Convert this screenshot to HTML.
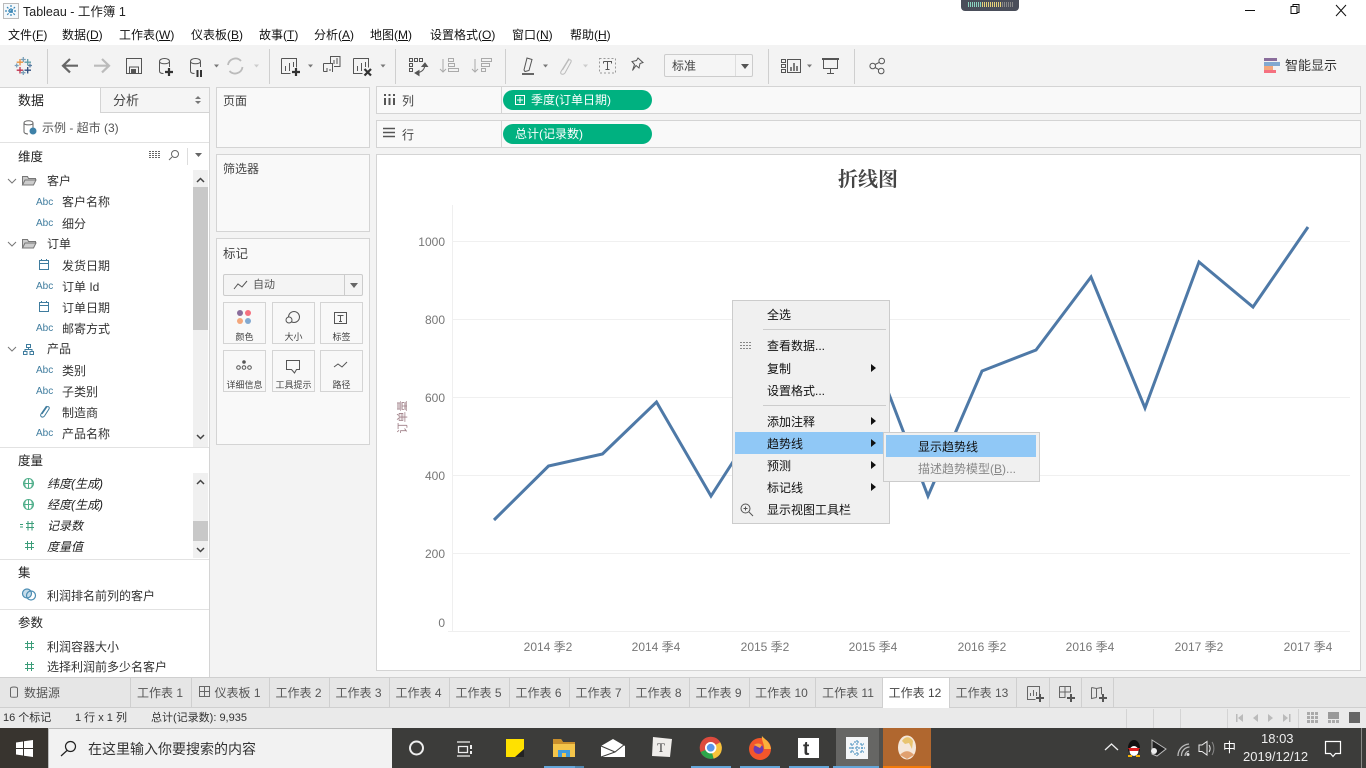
<!DOCTYPE html>
<html lang="zh"><head><meta charset="utf-8"><title>Tableau - 工作簿 1</title>
<style>
*{box-sizing:border-box}
html,body{margin:0;padding:0;width:1366px;height:768px;overflow:hidden;background:#f3f3f3}
body{position:relative;font:12px/16px "Liberation Sans","Noto Sans CJK SC",sans-serif;color:#333}
.a,.t,svg.i{position:absolute}
.t{white-space:nowrap;line-height:16px}
.u{text-decoration:underline}
.box{position:absolute;background:#f9f9f9;border:1px solid #d4d4d4}
.sep{position:absolute;width:1px;background:#cfcfcf}
.abc{position:absolute;font-size:10px;color:#3f7c9e;line-height:14px;left:36px}
.pill{position:absolute;left:503px;width:149px;height:20px;background:#00b180;border-radius:10px;color:#fff;line-height:20px;padding-left:12px;white-space:nowrap}
.mk{position:absolute;width:43px;height:42px;background:#f8f8f8;border:1px solid #d4d4d4;font-size:9px;text-align:center;padding-top:27px;line-height:14px;color:#444;white-space:nowrap}
.tab{position:absolute;top:678px;height:30px;border-right:1px solid #cfcfcf;color:#555;text-align:center;line-height:30px;white-space:nowrap;padding-right:2px}
.mi{position:absolute;left:767px;line-height:16px;color:#111;white-space:nowrap}
.arr{position:absolute;left:871px;width:0;height:0;border-left:5px solid #111;border-top:4px solid transparent;border-bottom:4px solid transparent}
svg{overflow:visible}
</style></head><body>

<!-- title + menu -->
<div class="a" style="left:0;top:0;width:1366px;height:45px;background:#fff"></div>
<svg class="i" style="left:3px;top:3px" width="16" height="16" viewBox="0 0 16 16"><rect x=".5" y=".5" width="15" height="15" fill="#f4f8fb" stroke="#bbb"/><path d="M8 2v12M2 8h12M4 4l8 8M12 4l-8 8" stroke="#3a87b7" stroke-width="1.2" stroke-dasharray="2 1"/></svg>
<div class="t" style="left:23px;top:4px;color:#222;font-size:12.5px">Tableau - 工作簿 1</div>
<div class="a" style="left:961px;top:0;width:58px;height:11px;background:#4a4e5a;border-radius:0 0 4px 4px"></div>
<div class="a" style="left:968px;top:2px;width:20px;height:5px;background:repeating-linear-gradient(90deg,#8bd3c0 0 1px,#4a4e5a 1px 2px)"></div>
<div class="a" style="left:982px;top:2px;width:20px;height:5px;background:repeating-linear-gradient(90deg,#e6d27a 0 1px,#4a4e5a 1px 2px)"></div>
<div class="a" style="left:1002px;top:2px;width:12px;height:5px;background:repeating-linear-gradient(90deg,#888 0 1px,#4a4e5a 1px 2px)"></div>
<svg class="i" style="left:1240px;top:0" width="126" height="22"><path d="M5 10.500h10" stroke="#111"/><path d="M51 6.500h6v7h-6zM53 6.500v-2h6v8h-2" fill="none" stroke="#111"/><path d="M96 5l10 11M106 5l-10 11" stroke="#111"/></svg>
<div class="t" style="left:8px;top:27px;color:#111">文件(<span class="u">F</span>)</div>
<div class="t" style="left:62px;top:27px;color:#111">数据(<span class="u">D</span>)</div>
<div class="t" style="left:119px;top:27px;color:#111">工作表(<span class="u">W</span>)</div>
<div class="t" style="left:191px;top:27px;color:#111">仪表板(<span class="u">B</span>)</div>
<div class="t" style="left:259px;top:27px;color:#111">故事(<span class="u">T</span>)</div>
<div class="t" style="left:314px;top:27px;color:#111">分析(<span class="u">A</span>)</div>
<div class="t" style="left:370px;top:27px;color:#111">地图(<span class="u">M</span>)</div>
<div class="t" style="left:430px;top:27px;color:#111">设置格式(<span class="u">O</span>)</div>
<div class="t" style="left:512px;top:27px;color:#111">窗口(<span class="u">N</span>)</div>
<div class="t" style="left:570px;top:27px;color:#111">帮助(<span class="u">H</span>)</div>

<!-- toolbar -->
<div class="sep" style="left:47px;top:49px;height:35px"></div>
<div class="sep" style="left:269px;top:49px;height:35px"></div>
<div class="sep" style="left:395px;top:49px;height:35px"></div>
<div class="sep" style="left:505px;top:49px;height:35px"></div>
<div class="sep" style="left:768px;top:49px;height:35px"></div>
<div class="sep" style="left:854px;top:49px;height:35px"></div>
<svg class="i" style="left:0;top:45px" width="1366" height="42" fill="none" stroke="#555">
<!-- logo -->
<g stroke-width="1.300">
<path d="M23.300 12v5M20.800 14.500h5" stroke="#7a9fb8"/>
<path d="M20 14v6.500M16.700 17.200h6.500" stroke="#e8923f" transform="translate(0 0)"/>
<path d="M27.700 14v6.500M24.500 17.200h6.500" stroke="#5f9ea8"/>
<path d="M16.700 18.500v4M14.700 20.500h4" stroke="#7a9fb8"/>
<path d="M30 18.500v4M28 20.500h4" stroke="#5a7fa3"/>
<path d="M20 22v6.500M16.700 25.200h6.500" stroke="#c0334d"/>
<path d="M27.700 22v6.500M24.500 25.200h6.500" stroke="#2f4f7f"/>
<path d="M23.300 25.500v4.500M21 27.700h4.500" stroke="#7a9fb8"/>
</g>
<path d="M78 20.700H63M70 14l-7 6.700 7 6.700" stroke="#666" stroke-width="2.200"/>
<path d="M94 20.700h15M102 14l7 6.700-7 6.700" stroke="#bbb" stroke-width="2.200"/>
<path d="M126.500 13.500h15v15h-15zM129.500 28v-6h9v6"/><rect x="131" y="24" width="5" height="4" fill="#555" stroke="none"/>
<path d="M159.500 16.500c0-4 10-4 10 0V22M159.500 16.500c0 3 10 3 10 0M159.500 16.500V26c0 1.800 2 2.500 4 2.500"/><path d="M165 27h8M169 23v8" stroke="#333" stroke-width="2.200"/>
<path d="M190.500 16.500c0-4 10-4 10 0V22M190.500 16.500c0 3 10 3 10 0M190.500 16.500V26c0 1.800 2 2.500 4 2.500"/><path d="M197.500 25v7M201 25v7" stroke="#333" stroke-width="2"/>
<path d="M214 19.500h5l-2.500 3z" fill="#777" stroke="none"/>
<path d="M228 20a7.500 7.500 0 0 1 13-4M242.500 22a7.500 7.500 0 0 1-13 4" stroke="#bbb" stroke-width="1.800"/><path d="M254 19.500h5l-2.500 3z" fill="#ccc" stroke="none"/>
<path d="M281.500 13.500h15v9M281.500 13.500v15h9M285.500 26v-5M289.500 26v-8M293.500 22v-5"/><path d="M292 27h8M296 23v8" stroke="#333" stroke-width="2.200"/>
<path d="M308 19.500h5l-2.500 3z" fill="#777" stroke="none"/>
<path d="M330.500 18v-6.500h9.500v10h-6M323.500 18.500h9v8.500M323.500 18.500v8M323.500 26.500h4" /><path d="M334 19v-4M337 19v-6M327 26v-3M330 26v-2" />
<path d="M353.500 13.500h15v9M353.500 13.500v15h9M357.500 26v-5M361.500 26v-8M365.500 22v-5"/><path d="M364.500 24l6.500 6.500M371 24l-6.500 6.500" stroke="#333" stroke-width="2.200"/>
<path d="M380.500 19.500h5l-2.500 3z" fill="#777" stroke="none"/>
<path d="M409.500 13.500h3v3h-3zM414.500 13.500h3v3h-3zM419.500 13.500h3v3h-3zM409.500 18.500h3v3h-3zM409.500 23.500h3v3h-3zM425 19c0 5-3 8-8 9"/><path d="M415 28l4 2.500v-5zM425 18l-3 3.500h5.500z" fill="#555"/>
<path d="M443 14v13M440 24l3 3 3-3M448.500 13.500h5v3h-5zM448.500 18.500h6v3h-6zM448.500 23.500h10v3h-10z" stroke="#aaa"/>
<path d="M475 14v13M472 24l3 3 3-3M481.500 13.500h10v3h-10zM481.500 18.500h8v3h-8zM481.500 23.500h4v3h-4z" stroke="#aaa"/>
<path d="M524 25l3-12 5 1.500-3 11-4 1z"/><rect x="522" y="28" width="12" height="2" fill="#666" stroke="none"/>
<path d="M543 19.500h5l-2.500 3z" fill="#777" stroke="none"/>
<path d="M569 13.500l-8 13c-1.500 3 2.500 3.500 4 1.500l6-11c1-2.500-2-3-3-1l-5.500 9" stroke="#bbb"/><path d="M583 19.500h5l-2.500 3z" fill="#ccc" stroke="none"/>
<rect x="599.500" y="13.500" width="16" height="14.500" stroke="#999" stroke-dasharray="2 2"/><path d="M603.500 16.500h8v2M603.500 16.500v2M607.500 16.500v8M605.500 24.500h4" stroke="#555"/>
<path d="M638 13l5 4.500-3 1-1 4.500-3-2.500-3.500 5 2-6-2.500-3 4.500-1z"/>
<path d="M807 19.500h5l-2.500 3z" fill="#777" stroke="none"/>
<path d="M781.500 14.500h4v3h-4zM781.500 19.500h4v3h-4zM781.500 24.500h4v3h-4zM787.500 14.500h13v13h-13z"/><path d="M791 26v-4M794 26v-8M797 26v-5" stroke-width="1.500"/>
<rect x="822" y="13" width="17" height="2" fill="#555" stroke="none"/><path d="M823.500 15v8.500h14V15M830.500 23.500V28M827 28.500h7"/>
<circle cx="881.700" cy="16" r="2.800"/><circle cx="872.700" cy="21" r="2.800"/><circle cx="881.200" cy="26" r="2.800"/><path d="M875 19.500l4.500-2.200M875 22.500l4 2.200"/>
</svg>
<div class="a" style="left:664px;top:54px;width:89px;height:23px;background:#f5f5f5;border:1px solid #ccc;border-radius:2px"></div>
<div class="t" style="left:672px;top:58px;color:#444">标准</div>
<div class="a" style="left:735px;top:55px;width:1px;height:21px;background:#ddd"></div>
<div class="a" style="left:741px;top:64px;width:0;height:0;border-left:4px solid transparent;border-right:4px solid transparent;border-top:5px solid #555"></div>
<div class="a" style="left:1264px;top:58px;width:13px;height:3px;background:#8a6d9b"></div>
<div class="a" style="left:1264px;top:62px;width:16px;height:4px;background:#82a9d0"></div>
<div class="a" style="left:1264px;top:66px;width:9px;height:4px;background:#f3a77c"></div>
<div class="a" style="left:1264px;top:70px;width:12px;height:3px;background:#f5707f"></div>
<div class="t" style="left:1285px;top:58px;font-size:13px;color:#333">智能显示</div>

<!-- left data pane -->
<div class="a" style="left:0;top:87px;width:210px;height:591px;background:#fff;border-right:1px solid #d4d4d4"></div>
<div class="a" style="left:100px;top:87px;width:110px;height:26px;background:#f5f5f5;border:1px solid #d4d4d4"></div>
<div class="a" style="left:0;top:87px;width:100px;height:1px;background:#d4d4d4"></div>
<div class="t" style="left:18px;top:93px;font-size:13px;color:#222">数据</div>
<div class="t" style="left:113px;top:93px;font-size:13px;color:#444">分析</div>
<svg class="i" style="left:195px;top:95px" width="8" height="10"><path d="M0 4l3-3 3 3zM0 6l3 3 3-3z" fill="#777"/></svg>
<svg class="i" style="left:22px;top:119px" width="16" height="16" fill="none" stroke="#666"><path d="M2 4c0-3 9-3 9 0v5M2 4c0 2.500 9 2.500 9 0M2 4v9c0 1 2 2 4 2"/><circle cx="11" cy="12" r="3.500" fill="#3e81a8" stroke="none"/></svg>
<div class="t" style="left:42px;top:120px;color:#555">示例 - 超市 (3)</div>
<div class="a" style="left:0;top:142px;width:209px;height:1px;background:#e2e2e2"></div>

<div class="t" style="left:18px;top:149px;font-size:12.5px;color:#222">维度</div>
<svg class="i" style="left:148px;top:147px" width="58" height="18" fill="none" stroke="#666"><path d="M1 4.500h12M1 6.500h12M1 8.500h12M1 10.500h12" stroke-dasharray="2 1"/><circle cx="27" cy="7" r="3.500"/><path d="M24 10l-3 3"/><path d="M39.500 1v17" stroke="#ddd"/><path d="M47 6h7l-3.500 4z" fill="#666" stroke="none"/></svg>
<div class="a" style="left:193px;top:170px;width:15px;height:277px;background:#f0f0f0"></div>
<div class="a" style="left:193px;top:187px;width:15px;height:143px;background:#c8c8c8"></div>
<svg class="i" style="left:193px;top:170px" width="15" height="277" fill="none" stroke="#444" stroke-width="1.500"><path d="M4 12l3.500-3.500L11 12M4 265l3.500 3.500L11 265"/></svg>
<svg class="i" style="left:6px;top:170px" width="30" height="190" fill="none" stroke="#777">
<path d="M2 9l4 4 4-4M2 72l4 4 4-4M2 177l4 4 4-4"/>
<path d="M16.500 15V6.500h5l1 2h7v2M16.500 15l2.500-5h11l-2.500 5z" fill="#ccc"/>
<path d="M16.500 78V69.500h5l1 2h7v2M16.500 78l2.500-5h11l-2.500 5z" fill="#ccc"/>
<path d="M20.500 174.500h4v3h-4zM17.500 181.500h3.500v3h-3.500zM24 181.500h3.500v3H24zM19 181.500v-2h7v2M22.500 177.500v2" stroke="#3f7c9e"/>
</svg>
<svg class="i" style="left:38px;top:258px" width="14" height="60" fill="none" stroke="#3f7c9e"><path d="M1.500 2.500h9v9h-9zM1.500 5.500h9M3.500 1v2M8.500 1v2"/><path d="M1.500 44.500h9v9h-9zM1.500 47.500h9M3.500 43v2M8.500 43v2"/></svg>
<svg class="i" style="left:38px;top:405px" width="12" height="13" fill="none" stroke="#3f7c9e"><path d="M8.500 1L3 9c-1.500 3 2 4 3.500 2L11 4C12 2 9.500.5 8.500 2.500L4 9"/></svg>
<div class="a" style="left:0;top:1px;width:0;height:0">
<div class="t" style="left:47px;top:172px">客户</div>
<div class="abc" style="top:195px">Abc</div><div class="t" style="left:62px;top:193px">客户名称</div>
<div class="abc" style="top:216px">Abc</div><div class="t" style="left:62px;top:215px">细分</div>
<div class="t" style="left:47px;top:235px">订单</div>
<div class="t" style="left:62px;top:257px">发货日期</div>
<div class="abc" style="top:279px">Abc</div><div class="t" style="left:62px;top:278px">订单 Id</div>
<div class="t" style="left:62px;top:299px">订单日期</div>
<div class="abc" style="top:321px">Abc</div><div class="t" style="left:62px;top:320px">邮寄方式</div>
<div class="t" style="left:47px;top:340px">产品</div>
<div class="abc" style="top:363px">Abc</div><div class="t" style="left:62px;top:362px">类别</div>
<div class="abc" style="top:384px">Abc</div><div class="t" style="left:62px;top:383px">子类别</div>
<div class="t" style="left:62px;top:404px">制造商</div>
<div class="abc" style="top:426px">Abc</div><div class="t" style="left:62px;top:425px">产品名称</div>
<div class="t" style="left:18px;top:452px;font-size:12.500px;color:#222">度量</div>
<div class="t" style="left:47px;top:475px;font-style:italic;color:#222">纬度(生成)</div>
<div class="t" style="left:47px;top:496px;font-style:italic;color:#222">经度(生成)</div>
<div class="t" style="left:47px;top:517px;font-style:italic;color:#222">记录数</div>
<div class="t" style="left:47px;top:538px;font-style:italic;color:#222">度量值</div>
<div class="t" style="left:18px;top:564px;font-size:12.500px;color:#222">集</div>
<div class="t" style="left:47px;top:587px">利润排名前列的客户</div>
<div class="t" style="left:18px;top:614px;font-size:12.500px;color:#222">参数</div>
<div class="t" style="left:47px;top:638px">利润容器大小</div>
<div class="t" style="left:47px;top:658px">选择利润前多少名客户</div>
</div>
<div class="a" style="left:0;top:447px;width:209px;height:1px;background:#e2e2e2"></div>
<div class="a" style="left:193px;top:473px;width:15px;height:85px;background:#f0f0f0"></div>
<div class="a" style="left:193px;top:521px;width:15px;height:20px;background:#c8c8c8"></div>
<svg class="i" style="left:193px;top:473px" width="15" height="85" fill="none" stroke="#444" stroke-width="1.500"><path d="M4 11l3.500-3.500L11 11M4 75l3.500 3.500L11 75"/></svg>
<svg class="i" style="left:18px;top:475px" width="22" height="82" fill="none" stroke="#4fae8a"><circle cx="10.500" cy="8.500" r="5"/><path d="M5.500 8.500h10M10.500 3.500v10M7.500 4.500c-1 2-1 6 0 8M13.500 4.500c1 2 1 6 0 8"/><g transform="translate(0 21)"><circle cx="10.500" cy="8.500" r="5"/><path d="M5.500 8.500h10M10.500 3.500v10M7.500 4.500c-1 2-1 6 0 8M13.500 4.500c1 2 1 6 0 8"/></g><path d="M2 49.500h3M2 52h3M8 48.500h8M8 52.500h8M10 46v9.500M14 46v9.500" stroke="#3a9c78"/><path d="M7 68.500h9M7 72.500h9M9.500 66v9M13.500 66v9" stroke="#3a9c78"/></svg>
<div class="a" style="left:0;top:559px;width:209px;height:1px;background:#e2e2e2"></div>
<svg class="i" style="left:21px;top:587px" width="16" height="15" fill="none" stroke="#4b8db3" stroke-width="1.200"><circle cx="6" cy="6.500" r="4.500" fill="#c6dcea"/><circle cx="10" cy="8.500" r="4.500"/></svg>
<div class="a" style="left:0;top:609px;width:209px;height:1px;background:#e2e2e2"></div>
<svg class="i" style="left:24px;top:639px" width="14" height="36" fill="none" stroke="#3a9c78"><path d="M1 4.500h9M1 8.500h9M3.500 2v9M7.500 2v9"/><path d="M1 25.500h9M1 29.500h9M3.500 23v9M7.500 23v9"/></svg>

<!-- cards -->
<div class="box" style="left:216px;top:87px;width:154px;height:61px"></div>
<div class="t" style="left:223px;top:93px;color:#444">页面</div>
<div class="box" style="left:216px;top:154px;width:154px;height:78px"></div>
<div class="t" style="left:223px;top:161px;color:#444">筛选器</div>
<div class="box" style="left:216px;top:238px;width:154px;height:207px"></div>
<div class="t" style="left:223px;top:246px;font-size:12.500px;color:#444">标记</div>
<div class="a" style="left:223px;top:274px;width:140px;height:22px;background:#f4f4f4;border:1px solid #ccc;border-radius:2px"></div>
<div class="a" style="left:344px;top:275px;width:1px;height:20px;background:#ccc"></div>
<div class="a" style="left:350px;top:283px;width:0;height:0;border-left:4px solid transparent;border-right:4px solid transparent;border-top:5px solid #666"></div>
<svg class="i" style="left:233px;top:280px" width="16" height="10" fill="none" stroke="#555"><path d="M1 9l4-5 4 3 5-6"/></svg>
<div class="t" style="left:253px;top:277px;font-size:11px;color:#555">自动</div>
<div class="mk" style="left:223px;top:302px">颜色</div>
<div class="mk" style="left:272px;top:302px">大小</div>
<div class="mk" style="left:320px;top:302px">标签</div>
<div class="mk" style="left:223px;top:350px">详细信息</div>
<div class="mk" style="left:272px;top:350px">工具提示</div>
<div class="mk" style="left:320px;top:350px">路径</div>
<svg class="i" style="left:223px;top:302px" width="140" height="90" fill="none" stroke="#555">
<circle cx="17" cy="11" r="3" fill="#8a6d9b" stroke="none"/><circle cx="25" cy="11" r="3" fill="#f5707f" stroke="none"/><circle cx="17" cy="19" r="3" fill="#f3a77c" stroke="none"/><circle cx="25" cy="19" r="3" fill="#82a9d0" stroke="none"/>
<circle cx="71" cy="15" r="5.500"/><circle cx="66" cy="18" r="3" fill="#f8f8f8"/>
<path d="M111.500 10.500h12v11h-12zM114.500 13.500h6M117.500 13.500v6M116 19.500h3"/>
<circle cx="21" cy="60" r="1.800" fill="#555" stroke="none"/><circle cx="15.500" cy="65.500" r="1.800"/><circle cx="21" cy="65.500" r="1.800"/><circle cx="26.500" cy="65.500" r="1.800"/>
<path d="M63.500 58.500h13v9h-3l-2 3.500-3-3.500h-5z"/>
<path d="M111 65l4-3 4 3 5-5"/>
</svg>

<!-- shelves -->
<div class="box" style="left:376px;top:86px;width:985px;height:28px"></div>
<div class="box" style="left:376px;top:120px;width:985px;height:28px"></div>
<div class="a" style="left:501px;top:87px;width:1px;height:26px;background:#d4d4d4"></div>
<div class="a" style="left:501px;top:121px;width:1px;height:26px;background:#d4d4d4"></div>
<svg class="i" style="left:383px;top:93px" width="14" height="46" fill="none" stroke="#555" stroke-width="2"><path d="M2 1v2M6.500 1v2M11 1v2M2 5v7M6.500 5v7M11 5v7"/><path d="M0 35.500h12M0 39.500h12M0 43.500h12" stroke-width="1.500"/></svg>
<div class="t" style="left:402px;top:93px;color:#444">列</div>
<div class="t" style="left:402px;top:127px;color:#444">行</div>
<div class="pill" style="top:90px;padding-left:28px">季度(订单日期)</div>
<svg class="i" style="left:515px;top:95px" width="11" height="11" fill="none" stroke="#fff"><path d="M.5.500h9v9h-9zM2 5h6M5 2v6"/></svg>
<div class="pill" style="top:124px">总计(记录数)</div>

<!-- view -->
<div class="a" style="left:376px;top:154px;width:985px;height:517px;background:#fff;border:1px solid #d4d4d4"></div>
<div class="t" style="left:838px;top:168px;font:bold 20px/24px 'Liberation Serif','Noto Serif CJK SC',serif;color:#444">折线图</div>
<svg class="i" style="left:0;top:0" width="1366" height="768" fill="none">
<path d="M452.500 205v426M448 631.500h902" stroke="#efefef"/>
<path d="M452 241.500h898M452 319.500h898M452 397.500h898M452 475.500h898M452 553.500h898" stroke="#f0f0f0"/>
<path d="M494 520L548.500 466 602.500 454 656.500 402 711 496 765 412 819.500 400 874 355 928 496 982 371 1036 350 1091 277 1145 408 1199 262 1253 307 1308 227" stroke="#4e79a7" stroke-width="3" stroke-linejoin="miter"/>
<text x="445" y="246" fill="#777" font-size="12" text-anchor="end">1000</text>
<text x="445" y="324" fill="#777" font-size="12" text-anchor="end">800</text>
<text x="445" y="402" fill="#777" font-size="12" text-anchor="end">600</text>
<text x="445" y="480" fill="#777" font-size="12" text-anchor="end">400</text>
<text x="445" y="558" fill="#777" font-size="12" text-anchor="end">200</text>
<text x="445" y="627" fill="#777" font-size="12" text-anchor="end">0</text>
<text transform="translate(406 417) rotate(-90)" fill="#a08088" font-size="11" text-anchor="middle">订单量</text>
<g fill="#777" font-size="12" text-anchor="middle">
<text x="548" y="651">2014 季2</text><text x="656" y="651">2014 季4</text><text x="765" y="651">2015 季2</text><text x="873" y="651">2015 季4</text><text x="982" y="651">2016 季2</text><text x="1090" y="651">2016 季4</text><text x="1199" y="651">2017 季2</text><text x="1308" y="651">2017 季4</text>
</g>
</svg>

<!-- context menu -->
<div class="a" style="left:732px;top:300px;width:158px;height:224px;background:#f0f0f0;border:1px solid #ccc"></div>
<div class="a" style="left:763px;top:329px;width:123px;height:1px;background:#ccc"></div>
<div class="a" style="left:763px;top:405px;width:123px;height:1px;background:#ccc"></div>
<div class="a" style="left:735px;top:432px;width:150px;height:22px;background:#90c8f6"></div>
<div class="mi" style="top:307px">全选</div>
<div class="mi" style="top:338px">查看数据...</div>
<div class="mi" style="top:361px">复制</div>
<div class="mi" style="top:383px">设置格式...</div>
<div class="mi" style="top:414px">添加注释</div>
<div class="mi" style="top:436px">趋势线</div>
<div class="mi" style="top:458px">预测</div>
<div class="mi" style="top:480px">标记线</div>
<div class="mi" style="top:502px">显示视图工具栏</div>
<div class="arr" style="top:364px"></div><div class="arr" style="top:417px"></div><div class="arr" style="top:439px"></div><div class="arr" style="top:461px"></div><div class="arr" style="top:483px"></div>
<svg class="i" style="left:740px;top:341px" width="14" height="10" stroke="#888"><path d="M0 1.500h12M0 4.500h12M0 7.500h12" stroke-dasharray="2 1"/></svg>
<svg class="i" style="left:740px;top:503px" width="14" height="14" fill="none" stroke="#555"><circle cx="5.500" cy="5.500" r="4.500"/><path d="M3.500 5.500h4M5.500 3.500v4M9 9l4 4"/></svg>
<div class="a" style="left:883px;top:432px;width:157px;height:50px;background:#f0f0f0;border:1px solid #ccc"></div>
<div class="a" style="left:886px;top:435px;width:150px;height:22px;background:#90c8f6"></div>
<div class="t" style="left:918px;top:439px;color:#111">显示趋势线</div>
<div class="t" style="left:918px;top:461px;color:#888">描述趋势模型(<span class="u">B</span>)...</div>

<!-- tabs -->
<div class="a" style="left:0;top:677px;width:1366px;height:1px;background:#cfcfcf"></div>
<div class="a" style="left:0;top:678px;width:1366px;height:30px;background:#e6e6e6;border-bottom:1px solid #cfcfcf"></div>
<div class="tab" style="left:0;width:131px;text-align:left;padding-left:24px">数据源</div>
<svg class="i" style="left:9px;top:686px" width="11" height="13" fill="none" stroke="#666"><path d="M1.500 2.500c0-2 7-2 7 0v8c0 1-7 1-7 0z"/></svg>
<div class="tab" style="left:131px;width:61px">工作表 1</div>
<div class="tab" style="left:192px;width:78px;padding-left:16px">仪表板 1</div>
<svg class="i" style="left:199px;top:686px" width="12" height="12" fill="none" stroke="#666"><path d="M.5.500h10v10H.5zM5.500.5v10M.5 5.500h10"/></svg>
<div class="tab" style="left:270px;width:60px">工作表 2</div>
<div class="tab" style="left:330px;width:60px">工作表 3</div>
<div class="tab" style="left:390px;width:60px">工作表 4</div>
<div class="tab" style="left:450px;width:60px">工作表 5</div>
<div class="tab" style="left:510px;width:60px">工作表 6</div>
<div class="tab" style="left:570px;width:60px">工作表 7</div>
<div class="tab" style="left:630px;width:60px">工作表 8</div>
<div class="tab" style="left:690px;width:60px">工作表 9</div>
<div class="tab" style="left:750px;width:66px">工作表 10</div>
<div class="tab" style="left:816px;width:67px">工作表 11</div>
<div class="tab" style="left:883px;width:67px;background:#fff;color:#444">工作表 12</div>
<div class="tab" style="left:950px;width:67px">工作表 13</div>
<div class="tab" style="left:1017px;width:33px"></div>
<div class="tab" style="left:1050px;width:32px"></div>
<div class="tab" style="left:1082px;width:32px"></div>
<svg class="i" style="left:1026px;top:685px" width="90" height="18" fill="none" stroke="#666"><path d="M1.500 1.500h12v8M1.500 1.500v13h8M4.500 11V8M7.500 11V5M10.500 11V7"/><path d="M10 13h8M14 9v8" stroke="#555" stroke-width="2"/><path d="M33.500 1.500h11v6M33.500 1.500v11h6M33.500 7h11M39 1.500v11"/><path d="M41 13h8M45 9v8" stroke="#555" stroke-width="2"/><path d="M65.500 2.500l5 1 5-1v7M65.500 2.500v11l5-1M70.500 3.500v9"/><path d="M73 13h8M77 9v8" stroke="#555" stroke-width="2"/></svg>

<!-- status -->
<div class="a" style="left:0;top:708px;width:1366px;height:20px;background:#eaeaea"></div>
<div class="t" style="left:3px;top:710px;font-size:11px;color:#333">16 个标记</div>
<div class="t" style="left:75px;top:710px;font-size:11px;color:#333">1 行 x 1 列</div>
<div class="t" style="left:151px;top:710px;font-size:11px;color:#333">总计(记录数): 9,935</div>
<div class="sep" style="left:1126px;top:709px;height:19px;background:#d4d4d4"></div>
<div class="sep" style="left:1153px;top:709px;height:19px;background:#d4d4d4"></div>
<div class="sep" style="left:1180px;top:709px;height:19px;background:#d4d4d4"></div>
<div class="sep" style="left:1227px;top:709px;height:19px;background:#d4d4d4"></div>
<div class="sep" style="left:1298px;top:709px;height:19px;background:#d4d4d4"></div>
<svg class="i" style="left:1235px;top:711px" width="60" height="16" fill="#bbb"><path d="M1 3h1.500v8H1zM8 3v8L3 7zM23 3v8l-5-4zM33 3v8l5-4zM48 3v8l5-4zM54 3h1.500v8H54z"/></svg>
<svg class="i" style="left:1306px;top:711px" width="56" height="14" fill="#aaa"><path d="M1 1h3v3H1zM5 1h3v3H5zM9 1h3v3H9zM1 5h3v3H1zM5 5h3v3H5zM9 5h3v3H9zM1 9h3v3H1zM5 9h3v3H5zM9 9h3v3H9z"/><rect x="22" y="1" width="11" height="7" fill="#999"/><path d="M22 9h3v3h-3zM26 9h3v3h-3zM30 9h3v3h-3z"/><rect x="43" y="1" width="11" height="11" fill="#666"/></svg>

<!-- taskbar -->
<div class="a" style="left:0;top:728px;width:1366px;height:40px;background:#3c3c3a"></div>
<div class="a" style="left:0;top:728px;width:48px;height:40px;background:#38342f"></div>
<svg class="i" style="left:16px;top:740px" width="17" height="17" fill="#fff"><path d="M0 2.500l7-1v6.500H0zM8 1.300l9-1.300v8H8zM0 9h7v6.500l-7-1zM8 9h9v8l-9-1.300z"/></svg>
<div class="a" style="left:48px;top:728px;width:344px;height:40px;background:#f2f2f2;border:1px solid #bbb;border-width:1px 0 0 1px"></div>
<svg class="i" style="left:60px;top:740px" width="17" height="17" fill="none" stroke="#222" stroke-width="1.200"><circle cx="10.500" cy="6.500" r="5"/><path d="M7 10.500L1 16"/></svg>
<div class="t" style="left:88px;top:741px;font-size:14px;color:#333">在这里输入你要搜索的内容</div>
<div class="a" style="left:836px;top:728px;width:43px;height:40px;background:#666664"></div>
<div class="a" style="left:879px;top:728px;width:4px;height:40px;background:#50504e"></div>
<div class="a" style="left:883px;top:728px;width:48px;height:40px;background:#b0672f"></div>
<svg class="i" style="left:392px;top:728px" width="540" height="40" fill="none">
<circle cx="24.500" cy="20" r="6.500" stroke="#eee" stroke-width="2"/>
<path d="M65 14h13M65 28h13M66.500 18.500h9v6h-9z" stroke="#eee" stroke-width="1.300"/><path d="M79 17v4M79 23v3" stroke="#eee" stroke-width="2"/>
<rect x="114" y="11" width="18" height="18" fill="#ffe100"/><path d="M132 21v8h-9z" fill="#222"/>
<path d="M161 11h8l2 3h12v15h-22z" fill="#f4c54a"/><path d="M161 11h8l2 3h12v2h-22z" fill="#c98f2c"/><path d="M166 29v-7h12v7h-4v-4h-4v4z" fill="#3f9bdf"/>
<path d="M209 18l12-7 12 7v11h-24z" fill="#fff"/><path d="M209 18l14 6 10-8M209 29l14-5" stroke="#3c3c3a"/>
<path d="M261 9l19 2-2 18-18-1z" fill="#efedea"/><text x="265" y="24" fill="#444" font-size="13" font-family="Liberation Serif">T</text>
<circle cx="318.700" cy="19.700" r="11" fill="#dd4b3e"/><path d="M318.700 19.700L308.700 24a11 11 0 0 0 13 6.500z" fill="#2da54a"/><path d="M318.700 19.700l9.500-5.500a11 11 0 0 1-6.500 16.500z" fill="#f8c33a"/><circle cx="318.700" cy="19.700" r="4.800" fill="#5a96e8" stroke="#fff" stroke-width="1.800"/>
<circle cx="368" cy="21" r="11" fill="#f3562b"/><path d="M370 8c2 3 8 5 9 13l-7 0c1-4-3-9-2-13z" fill="#fbb03b"/><circle cx="366.500" cy="21" r="5" fill="#6c3bb2"/><path d="M362 17c2-2 6-2 8 0l-2 3z" fill="#f9a040"/>
<rect x="406" y="10" width="21" height="20" fill="#fff"/><text x="411" y="27" fill="#333" font-size="19" font-weight="bold" font-family="Liberation Sans">t</text>
</svg>
<svg class="i" style="left:846px;top:737px" width="22" height="22"><rect width="22" height="22" fill="#f4f6f8"/><path d="M11 3v16M3 11h16M6 7v8M16 7v8M4 7h4M14 7h4M4 15h4M14 15h4M8 5h6M8 17h6" stroke="#5d9cc5" stroke-width="1.200" stroke-dasharray="2 1"/></svg>
<svg class="i" style="left:895px;top:735px" width="24" height="25"><ellipse cx="12" cy="12.500" rx="9" ry="12" fill="#f5e7da"/><path d="M7 6c3-5 8-5 11 0l-1 8-3-6-4 1z" fill="#e9c46f"/><path d="M5 20c4-5 10-5 14 0l-7 4z" fill="#e0a070"/></svg>
<div class="a" style="left:544px;top:766px;width:31px;height:2px;background:#64a6d9"></div>
<div class="a" style="left:575px;top:766px;width:9px;height:2px;background:#4f85ad"></div>
<div class="a" style="left:691px;top:766px;width:40px;height:2px;background:#64a6d9"></div>
<div class="a" style="left:740px;top:766px;width:40px;height:2px;background:#64a6d9"></div>
<div class="a" style="left:789px;top:766px;width:40px;height:2px;background:#64a6d9"></div>
<div class="a" style="left:833px;top:766px;width:46px;height:2px;background:#64a6d9"></div>
<div class="a" style="left:883px;top:766px;width:48px;height:2px;background:#f27a0a"></div>
<!-- tray -->
<svg class="i" style="left:1100px;top:736px" width="120" height="26" fill="none">
<path d="M5 14l6.500-6 6.500 6" stroke="#eee" stroke-width="1.300"/>
<ellipse cx="34" cy="12" rx="6" ry="8" fill="#111"/><ellipse cx="34" cy="15" rx="4.500" ry="5" fill="#fff"/><path d="M28 12h12l-2 3h-8z" fill="#e02020"/><path d="M28 20h4M36 20h4" stroke="#f5b000" stroke-width="2"/>
<path d="M52 4l14 9-9 7-5-2z" fill="#222" stroke="#bbb"/><circle cx="54" cy="15" r="3" fill="#eee"/>
<path d="M78 20a12 12 0 0 1 11-12M81.500 20a8.500 8.500 0 0 1 8-9M85 20a5 5 0 0 1 4-5" stroke="#bbb" stroke-width="1.300"/><circle cx="88" cy="18.500" r="1.500" fill="#ddd"/>
<path d="M99 9h3l5-3.500V19l-5-3.500h-3z" stroke="#eee"/><path d="M109 9c1.500 2 1.500 5 0 7" stroke="#eee"/><path d="M112 6c2.500 4 2.500 9 0 13" stroke="#888"/>
</svg>
<div class="t" style="left:1223px;top:740px;color:#fff;font-size:13px">中</div>
<div class="t" style="left:1261px;top:731px;color:#eee;font-size:13px">18:03</div>
<div class="t" style="left:1243px;top:749px;color:#eee;font-size:13px">2019/12/12</div>
<svg class="i" style="left:1324px;top:740px" width="20" height="20" fill="none" stroke="#fff" stroke-width="1.200"><path d="M1.500 1.500h15v12h-5l-2.500 3-2.500-3h-5z"/></svg>
<div class="a" style="left:1361px;top:728px;width:1px;height:40px;background:#8a8a88"></div>
</body></html>
